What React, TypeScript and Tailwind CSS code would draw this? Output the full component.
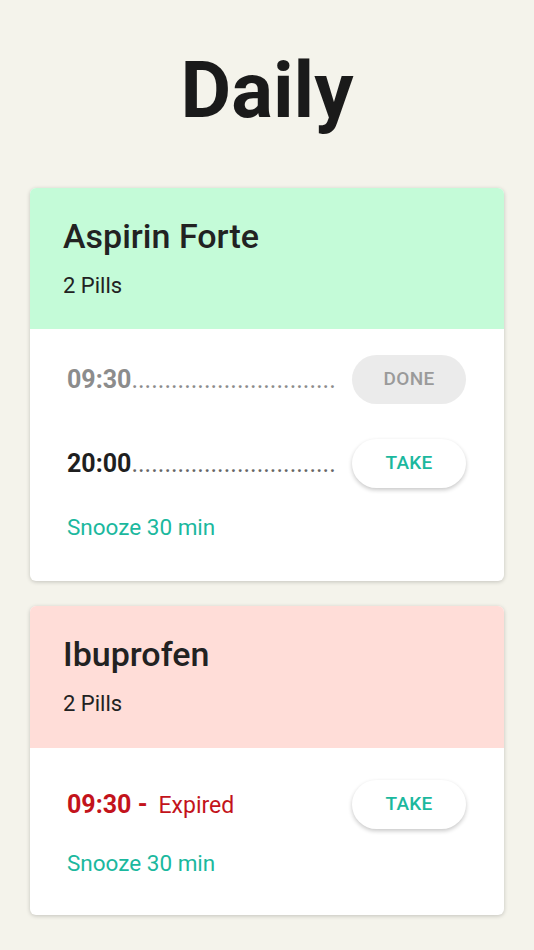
const DOTS = ".".repeat(31)

type Dose = {
  time: string
  status: "done" | "pending" | "expired"
}

type Med = {
  name: string
  amount: string
  header: string
  doses: Dose[]
  bodyTop: string
  snoozeGap: string
  bodyBottom: string
}

const meds: Med[] = [
  {
    name: "Aspirin Forte",
    amount: "2 Pills",
    header: "bg-[#c4fbd8] h-[141px]",
    doses: [
      { time: "09:30", status: "done" },
      { time: "20:00", status: "pending" },
    ],
    bodyTop: "pt-[26px]",
    snoozeGap: "mt-[28px]",
    bodyBottom: "pb-[42px]",
  },
  {
    name: "Ibuprofen",
    amount: "2 Pills",
    header: "bg-[#ffddd8] h-[142px]",
    doses: [{ time: "09:30", status: "expired" }],
    bodyTop: "pt-[32px]",
    snoozeGap: "mt-[23px]",
    bodyBottom: "pb-[41px]",
  },
]

const PillButton = ({ done }: { done: boolean }) => {
  if (done) {
    return (
      <button className="h-[49px] w-[114px] shrink-0 rounded-full bg-[#ebebeb] text-[19px] font-medium tracking-[0.3px] text-[#9a9a9a]">
        DONE
      </button>
    )
  }
  return (
    <button className="h-[49px] w-[114px] shrink-0 rounded-full bg-white text-[19px] font-medium tracking-[0.3px] text-[#1bb89e] shadow-[0_2px_4px_rgba(0,0,0,0.22)]">
      TAKE
    </button>
  )
}

const DoseRow = ({ dose }: { dose: Dose }) => {
  if (dose.status === "expired") {
    return (
      <div className="flex h-[49px] items-center justify-between">
        <span className="text-[25px] leading-none text-[#c3131b]">
          <span className="font-bold">{dose.time}&nbsp;-</span>
          <span className="ml-[11px] text-[23px]">Expired</span>
        </span>
        <PillButton done={false} />
      </div>
    )
  }

  const done = dose.status === "done"
  return (
    <div className="flex h-[49px] items-center justify-between">
      <span className="whitespace-nowrap text-[25px] leading-none">
        <span className={done ? "font-bold text-[#8c8c8c]" : "font-bold text-[#1f1f1f]"}>
          {dose.time}
        </span>
        <span className={done ? "text-[#8c8c8c]" : "text-[#666666]"}>{DOTS}</span>
      </span>
      <PillButton done={done} />
    </div>
  )
}

const MedCard = ({ med }: { med: Med }) => (
  <div className="overflow-hidden rounded-md bg-white shadow-[0_1px_4px_rgba(0,0,0,0.2)]">
    <div className={`${med.header} pl-[33px] pt-[31px]`}>
      <h2 className="text-[34px] font-medium leading-none text-[#222]">{med.name}</h2>
      <p className="mt-[22px] text-[22px] leading-none text-[#222]">{med.amount}</p>
    </div>
    <div className={`${med.bodyTop} ${med.bodyBottom} pl-[37px] pr-[38px]`}>
      <div className="flex flex-col gap-[35px]">
        {med.doses.map((dose, i) => (
          <DoseRow key={i} dose={dose} />
        ))}
      </div>
      <p className={`${med.snoozeGap} text-[22.5px] leading-none text-[#1bb89e]`}>
        Snooze 30 min
      </p>
    </div>
  </div>
)

export default function App() {
  return (
    <div
      className="min-h-[950px] bg-[#f4f3eb] px-[30px] pt-[52px]"
      style={{ fontFamily: "Roboto, 'Noto Sans', sans-serif" }}
    >
      <h1 className="text-center text-[78px] font-bold leading-none text-[#1a1a1a]">Daily</h1>
      <div className="mt-[58px] flex flex-col gap-[25px]">
        {meds.map((med) => (
          <MedCard key={med.name} med={med} />
        ))}
      </div>
    </div>
  )
}
